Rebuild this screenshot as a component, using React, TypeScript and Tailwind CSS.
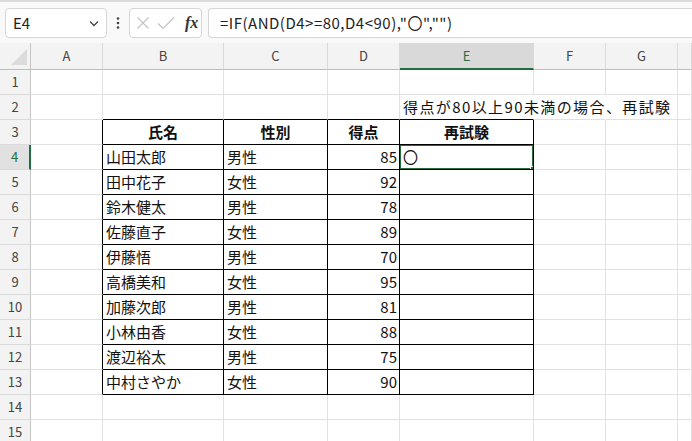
import React from 'react';

const cols = ['A', 'B', 'C', 'D', 'E', 'F', 'G', ''];

const people = [
  ['山田太郎', '男性', '85', '〇'],
  ['田中花子', '女性', '92', ''],
  ['鈴木健太', '男性', '78', ''],
  ['佐藤直子', '女性', '89', ''],
  ['伊藤悟', '男性', '70', ''],
  ['高橋美和', '女性', '95', ''],
  ['加藤次郎', '男性', '81', ''],
  ['小林由香', '女性', '88', ''],
  ['渡辺裕太', '男性', '75', ''],
  ['中村さやか', '女性', '90', ''],
];

const font = { fontFamily: '"Noto Sans CJK JP", "Noto Sans", sans-serif' };

// contents of the sheet, keyed by row number then column index (0 = A)
function cellText(row: number, col: number): string {
  if (row === 2 && col === 4) return '得点が80以上90未満の場合、再試験';
  if (row === 3) return ['', '氏名', '性別', '得点', '再試験'][col] ?? '';
  if (row >= 4 && row <= 13 && col >= 1 && col <= 4) return people[row - 4][col - 1];
  return '';
}

function inTable(row: number, col: number) {
  return row >= 3 && row <= 13 && col >= 1 && col <= 4;
}

function Cell({ row, col }: { row: number; col: number }) {
  const text = cellText(row, col);
  const table = inTable(row, col);
  // right edge: black when this cell or its right neighbour is in the table
  const rightBlack = table || inTable(row, col + 1);
  const bottomBlack = table || inTable(row + 1, col);
  const hideRight = row === 2 && (col === 4 || col === 5);
  const header = row === 3 && table;
  const number = col === 3 && row >= 4 && row <= 13;
  const selected = row === 4 && col === 4;

  return (
    <div
      className={`relative flex h-[25px] items-center border-b ${
        bottomBlack ? 'border-b-black' : 'border-b-[#e1e1e1]'
      } ${hideRight ? 'border-r border-r-white' : rightBlack ? 'border-r border-r-black' : 'border-r border-r-[#e1e1e1]'} ${
        header ? 'justify-center font-bold' : number ? 'justify-end pr-[2px]' : 'pl-[3px]'
      } ${row === 2 && col === 4 ? 'z-10 overflow-visible whitespace-nowrap tracking-[1.4px]' : 'overflow-hidden'} pt-[1px] text-[15px] text-[#111]`}
    >
      {text}
      {selected && (
        <>
          <div className="pointer-events-none absolute -top-[1px] -left-[1px] -right-[1px] -bottom-[1px] border-2 border-[#1e6e42]" />
          <div className="absolute -right-[4px] -bottom-[4px] z-20 h-[7px] w-[7px] border border-white bg-[#1e6e42]" />
        </>
      )}
    </div>
  );
}

export default function App() {
  const rows = Array.from({ length: 15 }, (_, i) => i + 1);

  return (
    <div className="h-[441px] w-[692px] overflow-hidden bg-white" style={font}>
      {/* formula bar */}
      <div className="h-[43px] border-t-2 border-t-[#dcdcdc] bg-[#f9f9f9] pt-[6px]">
        <div className="flex h-[30px] items-stretch">
          <div className="ml-[5px] flex w-[102px] items-center justify-between rounded-[4px] border border-[#d6d6d6] bg-white pl-[7px] pr-[6px] text-[15px] text-[#222]">
            <span>E4</span>
            <svg width="12" height="12" viewBox="0 0 12 12" fill="none" stroke="#444" strokeWidth="1.3">
              <path d="M2 4.5l4 4 4-4" />
            </svg>
          </div>
          <div className="flex w-[22px] items-center justify-center">
            <svg width="4" height="12" viewBox="0 0 4 12" fill="#444">
              <circle cx="2" cy="1.5" r="1.3" />
              <circle cx="2" cy="6" r="1.3" />
              <circle cx="2" cy="10.5" r="1.3" />
            </svg>
          </div>
          <div className="flex w-[73px] items-center gap-[7px] rounded-[4px] border border-[#d6d6d6] bg-white pl-[6px]">
            <svg width="14" height="14" viewBox="0 0 14 14" fill="none" stroke="#c4c4c4" strokeWidth="1.2">
              <path d="M1.5 1.5l11 11M12.5 1.5l-11 11" />
            </svg>
            <svg width="18" height="14" viewBox="0 0 18 14" fill="none" stroke="#c4c4c4" strokeWidth="1.2">
              <path d="M1 7.5l5 5L17 1.5" />
            </svg>
            <span className="ml-[3px] text-[16px] italic font-bold text-[#333]" style={{ fontFamily: '"Liberation Serif", serif' }}>
              fx
            </span>
          </div>
          <div className="ml-[6px] flex flex-1 items-center whitespace-nowrap rounded-l-[4px] border border-r-0 border-[#d6d6d6] bg-white pl-[11px] text-[15px] tracking-[0.5px] text-[#222]">
            =IF(AND(D4&gt;=80,D4&lt;90),"〇","")
          </div>
        </div>
      </div>

      {/* sheet */}
      <div className="grid grid-cols-[31px_72px_121px_104px_72px_134px_72px_72px_1fr]">
        <div className="relative h-[27px] border-r border-b border-r-[#c6c6c6] border-b-[#bdbdbd] bg-[#f3f3f3]">
          <svg className="absolute left-[11px] top-[6px]" width="16" height="16" viewBox="0 0 16 16">
            <path d="M16 0v16H0z" fill="#dcdcdc" />
          </svg>
        </div>
        {cols.map((c, i) => (
          <div
            key={c + i}
            className={`flex h-[27px] items-center justify-center border-r border-r-[#dadada] text-[13px] ${
              c === 'E'
                ? 'border-b-2 border-b-[#1e6e42] bg-[#d9d9d9] text-[#1e6e42]'
                : 'border-b border-b-[#bdbdbd] bg-[#f3f3f3] text-[#444]'
            }`}
          >
            {c}
          </div>
        ))}

        {rows.map((r) => (
          <React.Fragment key={r}>
            <div
              className={`flex h-[25px] items-center justify-center border-b border-b-[#dadada] text-[13px] ${
                r === 4
                  ? 'border-r-2 border-r-[#1e6e42] bg-[#e1e1e1] text-[#1e6e42]'
                  : 'border-r border-r-[#c6c6c6] bg-[#f3f3f3] text-[#444]'
              }`}
            >
              {r}
            </div>
            {cols.map((_, ci) => (
              <Cell key={ci} row={r} col={ci} />
            ))}
          </React.Fragment>
        ))}
      </div>
    </div>
  );
}
